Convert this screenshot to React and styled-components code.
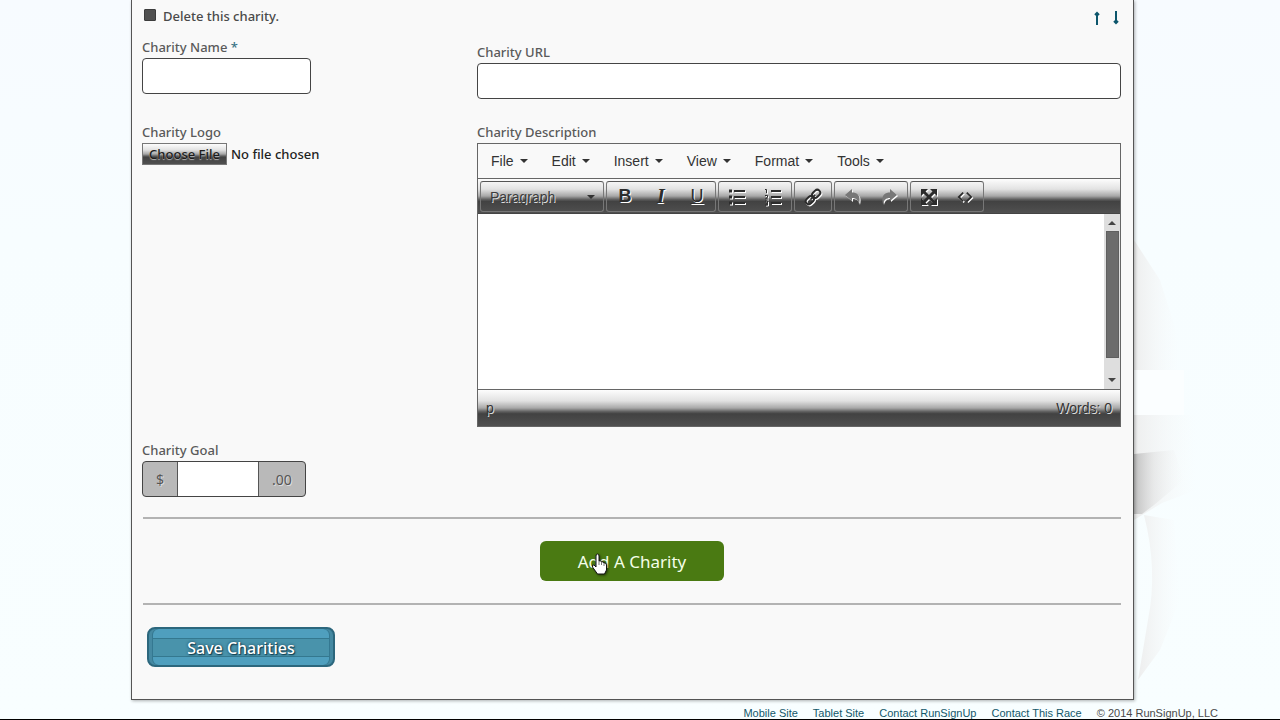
import React from 'react';
import styled, { createGlobalStyle } from 'styled-components';

const metal = 'linear-gradient(#fdfdfd 0, #e2e2e2 30%, #a8a8a8 50%, #606060 60%, #424242 66%, #505050 100%)';

const GlobalStyle = createGlobalStyle`
    * {
        box-sizing: border-box;
    }

    body {
        margin: 0;
        background: #f8fdff;
        font-family: 'Noto Sans', 'Open Sans', sans-serif;
        font-size: 13px;
        color: #4a4a4a;
    }

    button, input, select, textarea {
        font-family: inherit;
    }
`;

const Page = styled.div`
    display: grid;
    grid-template-columns: 131px minmax(0, 1fr) 146px;
    grid-template-rows: auto 19px;
    min-height: 100vh;
    background: linear-gradient(#f7fbff 0, #f7fdff 240px, #f8feff 100%);
    border-bottom: 1px solid #000;
    overflow: hidden;
`;

const Panel = styled.form`
    grid-column: 2;
    padding: 6px 12px 32px 10px;
    background: #f9f9f9;
    border: 1px solid #555;
    border-top: 0;
    box-shadow: 1px 1px 3px rgba(0, 0, 0, 0.3);
    z-index: 1;
`;

const TopRow = styled.div`
    display: flex;
    justify-content: space-between;
    height: 36px;
`;

const DeleteLabel = styled.label`
    display: flex;
    align-items: center;
    gap: 7px;
    height: 20px;
    padding-left: 2px;
    font-weight: 500;
`;

const Checkbox = styled.input`
    appearance: none;
    width: 12px;
    height: 12px;
    margin: 0 0 2px;
    background: #505050;
    border: 1px solid #3c3c3c;
    border-radius: 1px;
`;

const Arrows = styled.div`
    display: flex;
    gap: 9px;
    padding-top: 5px;
`;

const ArrowButton = styled.button`
    width: 10px;
    height: 14px;
    padding: 0;
    background: none;
    border: 0;
    color: #0d566c;

    svg {
        display: block;
    }
`;

const Fields = styled.div`
    display: grid;
    grid-template-columns: 335px minmax(0, 1fr);
`;

const Field = styled.div`
    padding-top: ${(props) => props.$top || 0}px;
`;

const Label = styled.label`
    display: block;
    height: 16px;
    line-height: 10px;
    color: #5a5a5a;
    font-weight: 500;

    span {
        color: #3a7486;
    }
`;

const TextInput = styled.input`
    display: block;
    width: ${(props) => props.$width || '100%'};
    height: 36px;
    padding: 0 10px;
    background: #fff;
    border: 1px solid #444;
    border-radius: 4px;
`;

const FileInput = styled.input`
    display: block;
    width: 240px;
    height: 22px;
    font-size: 13px;
    font-weight: 500;
    color: #222;

    &::file-selector-button {
        width: 85px;
        height: 22px;
        margin: 0 4px 0 0;
        padding: 0;
        background: ${metal};
        border: 1px solid #777;
        font-family: inherit;
        font-size: 13px;
        font-weight: 500;
        color: #1c1c1c;
        text-shadow: 0 1px 1px #bbb;
    }
`;

const Editor = styled.div`
    border: 1px solid #666;
    font-family: 'Liberation Sans', Arial, sans-serif;
`;

const MenuBar = styled.div`
    display: flex;
    height: 35px;
    padding: 0 1px;
    border-bottom: 1px solid #666;
`;

const MenuButton = styled.button`
    display: flex;
    align-items: center;
    gap: 6px;
    padding: 0 12px;
    background: none;
    border: 0;
    font-size: 14px;
    color: #333;
`;

const Caret = styled.span`
    border: 4px solid transparent;
    border-top-color: #333;
    border-bottom: 0;
`;

const ToolBar = styled.div`
    display: flex;
    gap: 2px;
    height: 35px;
    padding: 2px;
    background: ${metal};
    border-bottom: 1px solid #444;
`;

const ToolGroup = styled.div`
    display: flex;
    height: 31px;
    border: 1px solid #777;
    border-top-color: #555;
    border-radius: 3px;
`;

const ToolButton = styled.button`
    display: flex;
    align-items: center;
    justify-content: center;
    width: 36px;
    padding: 0;
    background: none;
    border: 0;
    font-size: 18px;
    color: ${(props) => (props.$muted ? '#777' : '#2c2c2c')};
    text-shadow: 1px 1px 0 #fff;

    svg {
        filter: drop-shadow(1px 1px 0 #fff);
    }

    i {
        font-family: 'Liberation Serif', serif;
        font-weight: 700;
        font-size: 20px;
    }
`;

const FormatBox = styled.div`
    display: flex;
    align-items: center;
    width: 122px;
    padding-right: 8px;
`;

const FormatSelect = styled.select`
    appearance: none;
    flex: 1;
    height: 24px;
    padding: 0 9px;
    background: none;
    border: 0;
    font-size: 14px;
    color: #3c3c3c;
    text-shadow: 1px 1px 0 #ddd;
`;

const Writing = styled.div`
    display: flex;
    height: 176px;
    background: #fff;
    border-bottom: 1px solid #666;
`;

const TextArea = styled.textarea`
    flex: 1;
    border: 0;
    resize: none;
    background: #fff;
`;

const ScrollTrack = styled.div`
    display: flex;
    flex-direction: column;
    align-items: center;
    width: 16px;
    padding: 7px 0;
    background: #dedede;
`;

const ScrollThumb = styled.div`
    width: 13px;
    height: 127px;
    margin: 6px 0 auto 1px;
    background: #6c6c6c;
    border: 1px solid #5f5f5f;
`;

const ScrollArrow = styled.span`
    border: 4px solid transparent;
    border-${(props) => (props.$up ? 'bottom' : 'top')}-color: #444;
    border-${(props) => (props.$up ? 'top' : 'bottom')}: 0;
`;

const StatusBar = styled.div`
    display: flex;
    justify-content: space-between;
    align-items: center;
    height: 36px;
    padding: 0 8px;
    background: ${metal};
    font-size: 14px;
    color: #333;
    text-shadow: 1px 1px 0 #ddd;
`;

const MoneyGroup = styled.div`
    display: flex;
    width: 164px;
    height: 36px;
    background: #b9b9b9;
    border: 1px solid #444;
    border-radius: 4px;
    overflow: hidden;
`;

const AddOn = styled.span`
    display: flex;
    align-items: center;
    justify-content: center;
    width: ${(props) => props.$width};
    color: #555;
    font-size: 14px;
    text-shadow: 1px 1px 0 #ddd;
`;

const MoneyInput = styled.input`
    flex: 1;
    min-width: 0;
    background: #fff;
    border: 1px solid #555;
    border-width: 0 1px;
`;

const AddRow = styled.div`
    display: flex;
    justify-content: center;
    margin: 20px 0 0 1px;
    padding: 22px 0;
    border: 2px solid #b3b3b3;
    border-width: 2px 0;
`;

const AddButton = styled.button`
    position: relative;
    width: 184px;
    height: 40px;
    background: #4a7a12;
    border: 0;
    border-radius: 6px;
    color: #f4ffe8;
    font-size: 17px;
`;

const Pointer = styled.svg`
    position: absolute;
    left: 51px;
    top: 12px;
    filter: drop-shadow(1px 1px 1px rgba(0, 0, 0, 0.5));
`;

const SaveButton = styled.button`
    display: block;
    width: 188px;
    height: 40px;
    margin: 22px 0 0 5px;
    padding: 2px 0 0;
    background: linear-gradient(#4f9fbe 0, #4f9fbe 9px, #34788f 9px, #34788f 10px, #4993ab 10px, #4993ab 27px, #34788f 27px, #34788f 28px, #4f9fbe 28px);
    border: 2px solid #2c677d;
    border-radius: 8px;
    box-shadow: inset 3px 0 0 #4589a2, inset -3px 0 0 #4589a2, inset 4px 0 0 #347891, inset -4px 0 0 #347891;
    color: #fff;
    font-size: 16px;
    font-weight: 500;
    text-shadow: 0 0 3px #123e50, 1px 1px 1px #123e50;
`;

const Scenery = styled.svg`
    grid-column: 3;
    grid-row: 1;
    width: 146px;
    height: 700px;
`;

const Footer = styled.footer`
    grid-column: 2 / 4;
    display: flex;
    justify-content: flex-end;
    gap: 15px;
    padding: 7px 62px 0 0;
    font-family: 'Liberation Sans', Arial, sans-serif;
    font-size: 11px;
    line-height: 12px;
    white-space: nowrap;

    a {
        color: #13586b;
        text-decoration: none;
    }
`;

const menus = ['File', 'Edit', 'Insert', 'View', 'Format', 'Tools'];
const links = ['Mobile Site', 'Tablet Site', 'Contact RunSignUp', 'Contact This Race'];

const Arrow = ({ down }) => (
    <svg width="10" height="14" viewBox="0 0 10 14" fill="none" stroke="currentColor" strokeWidth="2">
        {down ? <path d="M5 0V12M3 10L5 12L7 10" /> : <path d="M5 14V2M3 4L5 2L7 4" />}
    </svg>
);

const Icon = ({ children, size = 18 }) => (
    <svg width={size} height={size} viewBox="0 0 18 18" fill="none" stroke="currentColor" strokeWidth="2">
        {children}
    </svg>
);

const BulletIcon = () => (
    <Icon>
        <path d="M6 3H17M6 9H17M6 15H17" />
        <path d="M1 3H4M1 9H4M1 15H4" strokeWidth="3" />
    </Icon>
);

const NumberIcon = () => (
    <Icon>
        <path d="M7 3H17M7 9H17M7 15H17" />
        <path d="M1 1.500H2.500V5M1 7.500H3.500V9L1.500 11H4M1 13H3.500V17H1M2 15H3.500" strokeWidth="1" />
    </Icon>
);

const LinkIcon = () => (
    <Icon>
        <g transform="rotate(-45 9 9)">
            <rect x="0" y="6" width="9" height="6" rx="3" />
            <rect x="9" y="6" width="9" height="6" rx="3" />
            <path d="M6 9H12" />
        </g>
    </Icon>
);

const TurnIcon = ({ forward }) => (
    <Icon>
        <path
            d="M1 7L8 1V4.500C14 4.500 17 8 15 16C14 12 12 10 8 10V13Z"
            fill="currentColor"
            stroke="none"
            transform={forward ? 'matrix(-1 0 0 1 18 0)' : undefined}
        />
    </Icon>
);

const FullscreenIcon = () => (
    <Icon>
        <path d="M3 3L15 15M15 3L3 15" strokeWidth="3" />
        <path d="M1 1H8L1 8ZM17 1V8L10 1ZM1 17V10L8 17ZM17 17H10L17 10Z" fill="currentColor" stroke="none" />
    </Icon>
);

const CodeIcon = () => (
    <Icon size={16}>
        <path d="M7 4L2 9L7 14M11 4L16 9L11 14" />
    </Icon>
);

const DescriptionEditor = () => (
    <Editor>
        <MenuBar>
            {menus.map((name) => (
                <MenuButton type="button" key={name}>{name}<Caret /></MenuButton>
            ))}
        </MenuBar>
        <ToolBar>
            <ToolGroup>
                <FormatBox>
                    <FormatSelect aria-label="Format"><option>Paragraph</option></FormatSelect>
                    <Caret />
                </FormatBox>
            </ToolGroup>
            <ToolGroup>
                <ToolButton type="button"><b>B</b></ToolButton>
                <ToolButton type="button"><i>I</i></ToolButton>
                <ToolButton type="button"><u>U</u></ToolButton>
            </ToolGroup>
            <ToolGroup>
                <ToolButton type="button" aria-label="Bullet list"><BulletIcon /></ToolButton>
                <ToolButton type="button" aria-label="Numbered list"><NumberIcon /></ToolButton>
            </ToolGroup>
            <ToolGroup>
                <ToolButton type="button" aria-label="Insert link"><LinkIcon /></ToolButton>
            </ToolGroup>
            <ToolGroup>
                <ToolButton type="button" $muted aria-label="Undo"><TurnIcon /></ToolButton>
                <ToolButton type="button" $muted aria-label="Redo"><TurnIcon forward /></ToolButton>
            </ToolGroup>
            <ToolGroup>
                <ToolButton type="button" aria-label="Fullscreen"><FullscreenIcon /></ToolButton>
                <ToolButton type="button" aria-label="Source code"><CodeIcon /></ToolButton>
            </ToolGroup>
        </ToolBar>
        <Writing>
            <TextArea id="description" />
            <ScrollTrack>
                <ScrollArrow $up />
                <ScrollThumb />
                <ScrollArrow />
            </ScrollTrack>
        </Writing>
        <StatusBar>
            <span>p</span>
            <span>Words: 0</span>
        </StatusBar>
    </Editor>
);

const App = () => {
    return (
        <>
            <GlobalStyle />
            <Page>
                <Panel>
                    <TopRow>
                        <DeleteLabel><Checkbox type="checkbox" />Delete this charity.</DeleteLabel>
                        <Arrows>
                            <ArrowButton type="button" aria-label="Move up"><Arrow /></ArrowButton>
                            <ArrowButton type="button" aria-label="Move down"><Arrow down /></ArrowButton>
                        </Arrows>
                    </TopRow>
                    <Fields>
                        <Field>
                            <Label htmlFor="name">Charity Name <span>*</span></Label>
                            <TextInput id="name" $width="169px" />
                        </Field>
                        <Field $top={5}>
                            <Label htmlFor="url">Charity URL</Label>
                            <TextInput id="url" />
                        </Field>
                        <Field $top={28}>
                            <Label htmlFor="logo">Charity Logo</Label>
                            <FileInput id="logo" type="file" />
                        </Field>
                        <Field $top={28}>
                            <Label htmlFor="description">Charity Description</Label>
                            <DescriptionEditor />
                        </Field>
                        <Field $top={18}>
                            <Label htmlFor="goal">Charity Goal</Label>
                            <MoneyGroup>
                                <AddOn $width="34px">$</AddOn>
                                <MoneyInput id="goal" />
                                <AddOn $width="46px">.00</AddOn>
                            </MoneyGroup>
                        </Field>
                    </Fields>
                    <AddRow>
                        <AddButton type="button">
                            Add A Charity
                            <Pointer width="17" height="23" viewBox="0 0 17 23">
                                <path
                                    d="M5 14V3Q5 1 6.500 1Q8 1 8 3V8Q10 7 10.500 9Q12.500 8 13 10Q15.500 9.500 15.500 12V17L13.500 21H6.500L1.500 14Q1 11 3 12Z"
                                    fill="#fff"
                                    stroke="#111"
                                />
                                <path d="M8 8V12M10.500 9V12M13 10V13" stroke="#777" fill="none" />
                            </Pointer>
                        </AddButton>
                    </AddRow>
                    <SaveButton type="submit">Save Charities</SaveButton>
                </Panel>
                <Scenery viewBox="0 0 146 700" aria-hidden="true">
                    <defs>
                        <linearGradient id="fade">
                            <stop offset="0" stopColor="#b4b4b4" stopOpacity="0.8" />
                            <stop offset="0.4" stopColor="#ddd" stopOpacity="0.5" />
                            <stop offset="1" stopColor="#f4f4f4" stopOpacity="0" />
                        </linearGradient>
                        <linearGradient id="haze">
                            <stop offset="0" stopColor="#ececec" stopOpacity="0.9" />
                            <stop offset="1" stopColor="#f8f8f8" stopOpacity="0" />
                        </linearGradient>
                    </defs>
                    <path d="M0 240L26 280L42 330L45 370H0Z" fill="url(#haze)" />
                    <path d="M0 370H50V415H0Z" fill="#fbfeff" />
                    <path d="M0 415H62V490L28 503L0 520Z" fill="url(#haze)" />
                    <path d="M0 454L40 450L50 480L20 505L8 514H0Z" fill="url(#fade)" />
                    <path d="M10 515Q24 570 14 620L4 680L26 650L46 600L40 520Z" fill="url(#haze)" />
                </Scenery>
                <Footer>
                    {links.map((text) => <a href="#" key={text}>{text}</a>)}
                    <span>© 2014 RunSignUp, LLC</span>
                </Footer>
            </Page>
        </>
    );
};

export default App;
